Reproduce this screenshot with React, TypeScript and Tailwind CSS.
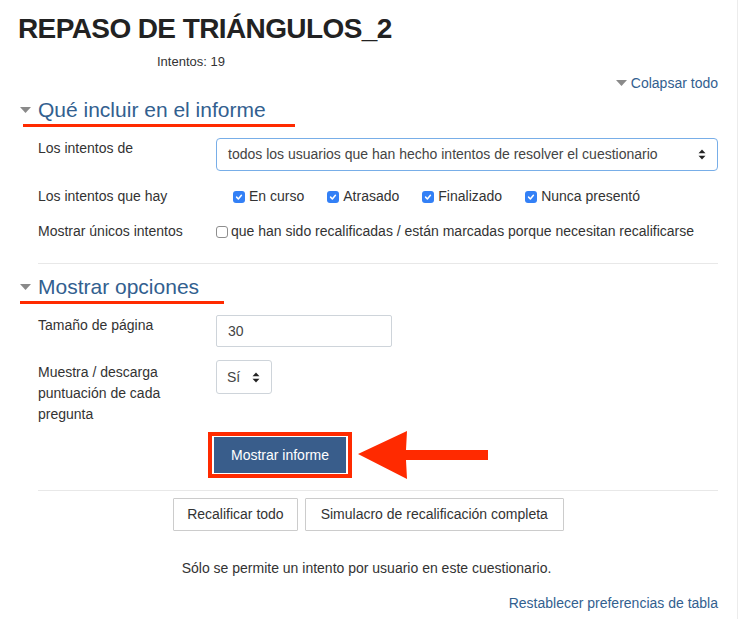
import React from 'react';

const BLUE = 'text-[#32608f]';

const Check = ({ checked }: { checked: boolean }) =>
  checked ? (
    <span className="inline-flex h-[12px] w-[12px] items-center justify-center rounded-[3px] bg-[#3380f6]">
      <svg width="8" height="8" viewBox="0 0 10 10">
        <path d="M2 5.2 L4.2 7.4 L8 2.8" fill="none" stroke="white" strokeWidth="1.9" strokeLinecap="round" strokeLinejoin="round" />
      </svg>
    </span>
  ) : (
    <span className="inline-block h-[12px] w-[12px] rounded-[3px] border border-[#8e8e8e] bg-white" />
  );

const UpDown = () => (
  <svg width="8" height="11" viewBox="0 0 8 11">
    <path d="M4 0.5 L7.5 4.3 L0.5 4.3 Z" fill="#222" />
    <path d="M4 10.5 L7.5 6.7 L0.5 6.7 Z" fill="#222" />
  </svg>
);

const Caret = () => (
  <svg width="11" height="7" viewBox="0 0 11 7">
    <path d="M0 0 L11 0 L5.5 6 Z" fill="#8a8a8a" />
  </svg>
);

const Row = ({ label, children, className = '' }: { label: React.ReactNode; children: React.ReactNode; className?: string }) => (
  <div className={`flex ${className}`}>
    <div className="w-[216px] shrink-0 pl-[38px] leading-[21px]">{label}</div>
    <div className="flex-1 pr-[19px]">{children}</div>
  </div>
);

export default function App() {
  return (
    <div
      className="w-[738px] min-h-[619px] bg-white border-r border-[#ececec] text-[14px] text-[#333]"
      style={{ fontFamily: '"Liberation Sans", Arial, sans-serif' }}
    >
      <h1 className="pl-[18px] pt-[11px] text-[28px] font-bold leading-[36px] text-[#222] tracking-[-0.6px]">
        REPASO DE TRIÁNGULOS_2
      </h1>
      <div className="mt-[7px] pl-[157px] text-[13px] leading-[16px]">Intentos: 19</div>

      <div className="mt-[5px] flex justify-end pr-[19px]">
        <a className={`flex items-center gap-[4px] ${BLUE} leading-[16px]`}>
          <Caret />
          <span>Colapsar todo</span>
        </a>
      </div>

      {/* Qué incluir */}
      <div className="mt-[6px] pl-[20px]">
        <div className="flex items-center gap-[7px]">
          <Caret />
          <span className={`text-[21px] leading-[26px] ${BLUE}`}>Qué incluir en el informe</span>
        </div>
        <div className="ml-[3px] mt-[1px] h-[3px] w-[272px] bg-[#ff2a00]" />
      </div>

      <Row label="Los intentos de" className="mt-[11px]">
        <div className="flex h-[33px] items-center justify-between rounded-[4px] border border-[#78aee8] pl-[11px] pr-[11px] text-[#444]">
          <span>todos los usuarios que han hecho intentos de resolver el cuestionario</span>
          <UpDown />
        </div>
      </Row>

      <Row label="Los intentos que hay" className="mt-[15px]">
        <div className="flex items-center pl-[17px] leading-[21px]">
          <label className="flex items-center gap-[4px]">
            <Check checked />
            <span>En curso</span>
          </label>
          <label className="ml-[23px] flex items-center gap-[4px]">
            <Check checked />
            <span>Atrasado</span>
          </label>
          <label className="ml-[23px] flex items-center gap-[4px]">
            <Check checked />
            <span>Finalizado</span>
          </label>
          <label className="ml-[23px] flex items-center gap-[4px]">
            <Check checked />
            <span>Nunca presentó</span>
          </label>
        </div>
      </Row>

      <Row label="Mostrar únicos intentos" className="mt-[14px]">
        <label className="flex items-center gap-[3px] leading-[21px]">
          <Check checked={false} />
          <span>que han sido recalificadas / están marcadas porque necesitan recalificarse</span>
        </label>
      </Row>

      <div className="ml-[38px] mr-[19px] mt-[21px] border-t border-[#e8e8e8]" />

      {/* Mostrar opciones */}
      <div className="mt-[10px] pl-[20px]">
        <div className="flex items-center gap-[7px]">
          <Caret />
          <span className={`text-[21px] leading-[26px] ${BLUE}`}>Mostrar opciones</span>
        </div>
        <div className="mt-[1px] h-[3px] w-[204px] bg-[#ff2a00]" />
      </div>

      <Row label="Tamaño de página" className="mt-[11px]">
        <div className="flex h-[32px] w-[176px] items-center rounded-[2px] border border-[#ced4da] pl-[11px] text-[#444]">30</div>
      </Row>

      <Row label={<>Muestra / descarga<br />puntuación de cada<br />pregunta</>} className="mt-[15px]">
        <div className="-mt-[2px] flex h-[34px] w-[56px] items-center justify-between rounded-[3px] border border-[#ced4da] pl-[10px] pr-[11px] text-[#444]">
          <span>Sí</span>
          <UpDown />
        </div>
      </Row>

      <div className="mt-[4px] flex items-center pl-[208px]">
        <div className="border-4 border-[#ff2a00] px-[2px] py-[1px]">
          <button className="h-[36px] w-[132px] bg-[#395d8b] text-[14px] text-white">Mostrar informe</button>
        </div>
        <svg width="134" height="52" viewBox="0 0 134 52" className="ml-[4px]">
          <polygon points="2,25 51,2 50,21 132,21 132,31 50,31 51,50" fill="#ff2a00" />
        </svg>
      </div>

      <div className="ml-[38px] mr-[19px] mt-[9px] border-t border-[#e8e8e8]" />

      <div className="mt-[7px] flex justify-center gap-[7px]">
        <button className="h-[33px] rounded-[1px] border border-[#ccc] bg-white px-[13px] text-[#333]">Recalificar todo</button>
        <button className="h-[33px] rounded-[1px] border border-[#ccc] bg-white px-[15px] text-[#333]">Simulacro de recalificación completa</button>
      </div>

      <div className="mt-[29px] pr-[4px] text-center leading-[16px]">Sólo se permite un intento por usuario en este cuestionario.</div>

      <div className="mt-[19px] flex justify-end pr-[19px]">
        <a className={`${BLUE} leading-[16px]`}>Restablecer preferencias de tabla</a>
      </div>
    </div>
  );
}
